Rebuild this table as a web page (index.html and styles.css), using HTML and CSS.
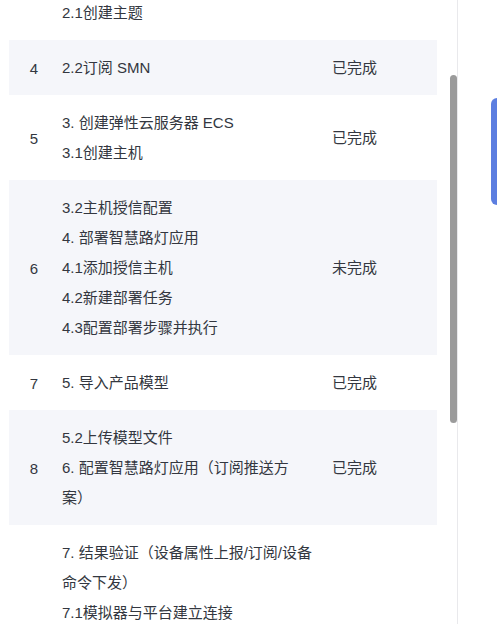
FILE: index.html
```html
<!DOCTYPE html>
<html lang="zh-CN">
<head>
<meta charset="utf-8">
<title>任务进度</title>
<link rel="stylesheet" href="styles.css">
</head>
<body>
<div class="page">
  <div class="panel">
    <div class="table">
      <div class="row">
        <div class="idx">3</div>
        <div class="content">
          <div class="line">1.3注册设备</div>
          <div class="line">2. 配置消息通知服务 SMN</div>
          <div class="line">2.1创建主题</div>
        </div>
        <div class="status">已完成</div>
      </div>
      <div class="row alt">
        <div class="idx">4</div>
        <div class="content">
          <div class="line">2.2订阅 SMN</div>
        </div>
        <div class="status">已完成</div>
      </div>
      <div class="row">
        <div class="idx">5</div>
        <div class="content">
          <div class="line">3. 创建弹性云服务器 ECS</div>
          <div class="line">3.1创建主机</div>
        </div>
        <div class="status">已完成</div>
      </div>
      <div class="row alt">
        <div class="idx">6</div>
        <div class="content">
          <div class="line">3.2主机授信配置</div>
          <div class="line">4. 部署智慧路灯应用</div>
          <div class="line">4.1添加授信主机</div>
          <div class="line">4.2新建部署任务</div>
          <div class="line">4.3配置部署步骤并执行</div>
        </div>
        <div class="status">未完成</div>
      </div>
      <div class="row">
        <div class="idx">7</div>
        <div class="content">
          <div class="line">5. 导入产品模型</div>
        </div>
        <div class="status">已完成</div>
      </div>
      <div class="row alt">
        <div class="idx">8</div>
        <div class="content">
          <div class="line">5.2上传模型文件</div>
          <div class="line">6. 配置智慧路灯应用（订阅推送方<br>案）</div>
        </div>
        <div class="status">已完成</div>
      </div>
      <div class="row">
        <div class="idx">9</div>
        <div class="content">
          <div class="line">7. 结果验证（设备属性上报/订阅/设备命令下发）</div>
          <div class="line">7.1模拟器与平台建立连接</div>
          <div class="line">7.2设备属性上报</div>
          <div class="line">7.3查看订阅推送消息</div>
          <div class="line">7.4平台下发命令</div>
          <div class="line">7.5查看路灯状态</div>
          <div class="line">8. 释放资源</div>
          <div class="line">8.1删除云服务器</div>
        </div>
        <div class="status">未完成</div>
      </div>
    </div>
    <div class="thumb"></div>
  </div>
  <div class="side">
    <div class="tab"></div>
  </div>
</div>
</body>
</html>
```

FILE: styles.css
```css
html, body {
  margin: 0;
  padding: 0;
  background: #ffffff;
}

body {
  font-family: "Liberation Sans", "Noto Sans CJK SC", sans-serif;
  font-size: 15px;
  color: #333740;
}

.page {
  display: flex;
  width: 497px;
  height: 624px;
  overflow: hidden;
}

.panel {
  position: relative;
  width: 457px;
  height: 624px;
  overflow: hidden;
  border-right: 1px solid #e9e9ec;
  flex: none;
}

.table {
  width: 428px;
  margin: -75px 0 0 9px;
}

.row {
  display: grid;
  grid-template-columns: 50px 273px 1fr;
  align-items: center;
  padding: 13px 0 12px;
}

.row.alt {
  background: #f5f6fa;
}

.idx {
  text-align: center;
}

.content {
  padding: 0 17px 0 3px;
}

.line {
  line-height: 30px;
}

.status {
  line-height: 30px;
}

.thumb {
  position: absolute;
  left: 450px;
  top: 75px;
  width: 7px;
  height: 348px;
  border-radius: 4px;
  background: #9b9b9b;
}

.side {
  flex: 1;
  display: flex;
  flex-direction: column;
  align-items: flex-end;
  padding-top: 98px;
}

.tab {
  width: 6px;
  height: 107px;
  background: #5c7ee0;
  border-radius: 6px 0 0 6px;
}
```
